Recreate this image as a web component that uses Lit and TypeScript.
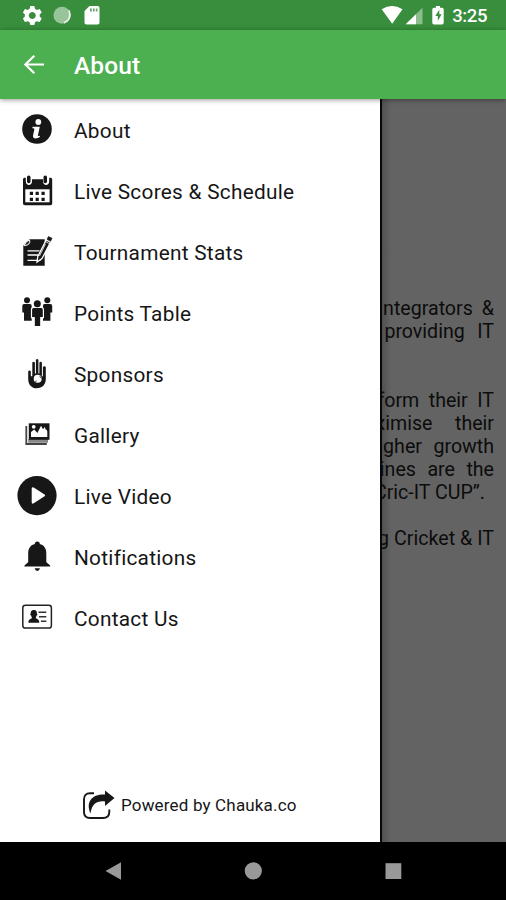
import { LitElement, html, css, svg } from "lit";
import { customElement } from "lit/decorators.js";

// Menu glyphs share a 40x40 grid.
const glyphs = {
  info: svg`<circle cx="20" cy="19" r="14.800"/><circle cx="21.300" cy="12" r="2.900" fill="#fff"/><path fill="#fff" d="M15.600 16.800h7.200l-1.900 8.600c-.2 1 .9.8 2.200.1l-.3 1.600c-2.600 1.700-7.600 2.300-6.700-1.900l1.300-6.100c.1-.7-.8-.8-2.100-.8z"/>`,
  calendar: svg`<path d="M7.500 6.700h1.300v3.500c0 5 6.200 5 6.200 0V8.300h11v1.900c0 5 6.200 5 6.200 0V6.700h1.300q1.700 0 1.700 1.700V32.500q0 1.800-1.800 1.800H8q-2 0-2-1.800V8.400q0-1.700 1.500-1.700z"/><rect x="10" y="4.400" width="3.500" height="7.800" rx="1.700"/><rect x="26.500" y="4.400" width="3.500" height="7.800" rx="1.700"/><path fill="#fff" d="M8.300 18.300h24.300v13H8.300z"/><path d="M12.800 20.800h3.200v3.200h-3.200zm5.800 0h3.200v3.200h-3.200zm5.900 0h3.200v3.200h-3.200zM12.800 26.700h3.200v3.200h-3.200zm5.800 0h3.200v3.200h-3.200zm5.900 0h3.200v3.200h-3.200z"/>`,
  notes: svg`<path d="M12.500 7.300h15.200v26.500H6.300V13.500z"/><path d="M7 13.700q1.600-4.500 5.500-5.800 1.800 5-5.500 5.800z" fill="#333" stroke="#fff" stroke-width="1"/><path d="M10.500 18.900h12M10.500 23h11M10.500 28.300h13" fill="none" stroke="#fff" stroke-width="1.300"/><path d="M20.800 24.500 29.300 8l4.200 2.200L25 26.600l-5 3.500z" stroke="#fff" stroke-width="1.300"/><path d="m30 7.300 1.500-2.800 3.500 1.800-1.500 3z" stroke="#222" stroke-width=".7"/><path d="m28.800 9.800 3.800 2M22.500 24l6-12" stroke="#fff" stroke-width=".8"/>`,
  people: svg`<circle cx="10" cy="7.200" r="3"/><circle cx="30.300" cy="7.200" r="3"/><path d="M7 10.900h6q1.700 0 1.700 2V27.700H7v-8.200H5.300v-6.600q0-2 1.700-2zM27.300 10.900h6q1.900 0 1.900 2v6.600h-1.800v8.200H26V12.900q0-2 1.300-2z"/><path d="M16.500 14.400h7.800q2.100 0 2.100 2.300v8h-2.600v9h-6.600v-9h-2.700v-8q0-2.300 2-2.300z" stroke="#fff" stroke-width="1.200"/><circle cx="20.300" cy="10.700" r="3.500"/>`,
  hand: svg`<path d="M11.200 17.200q1.300-1.200 2.600 0v5h1.500V8.500q1.200-1.500 2.600 0v11h1V5.700q1.200-1.500 2.500 0v13.800h1V8.500q1.300-1.500 2.500 0v13.700h1V13q1.500-1.400 2.900 0v12c0 5.500-3.600 9.300-9 9.300-5.300 0-8.600-3.600-8.600-9.300z"/><circle cx="20.700" cy="24.800" r="4" fill="#fff"/><path d="m23 21.500.3 2.200 1.500.5M18 27.600l1.800-.8" fill="none" stroke="#333" stroke-width=".8"/>`,
  gallery: svg`<path d="M9.300 11v18h20.500" fill="none" stroke="#444" stroke-width="1.800"/><path d="M11.300 24h19.700v3.800H11.300z" fill="#888"/><path d="M11.800 8.300h20.700v16.500H11.800z"/><path d="M14 22v-5.100l3.200-2.500 3.200 3.600 3.600-7.200 2 3.500 1.800-2.200 1.200 3.200.6-.7.700 2V22z" fill="#fff"/><circle cx="16.700" cy="11.800" r="1.900" fill="#fff"/>`,
  video: svg`<circle cx="20" cy="19.600" r="19.600"/><path d="M14.700 12.700q0-2.200 2-1.200l10.900 7q1.300.9 0 1.800l-10.900 7q-2 1-2-1z" fill="#fff"/>`,
  bell: svg`<circle cx="20.300" cy="7" r="2.500"/><path d="M20.300 6.700c6 0 9 4 9 9.700v8.100c0 2 4 2.800 4 4.900H7.300c0-2.100 3.900-2.900 3.900-4.900v-8.100c0-5.700 3-9.700 9.100-9.700z"/><path d="M17.600 31.300h5.400q-.7 2.600-2.700 2.600t-2.700-2.600z"/>`,
  contact: svg`<rect x="5.800" y="7.200" width="28.600" height="22.800" rx="2.600" fill="#fff" stroke="#222" stroke-width="1.500"/><path d="M16.800 11.900c2.700 0 3.300 1.900 3.100 3.900 1 .2.400 1.700-.3 1.700-.3 1.300-.8 1.800-.8 2.800 1.500.9 3.500 1 3.500 4.500H11.400c0-3.500 2-3.600 3.500-4.500 0-1-.5-1.500-.8-2.800-.8 0-1.300-1.500-.4-1.700-.2-2 .4-3.900 3.100-3.900z"/><path d="M21.500 14.200h7.800M22 18.800h7.300M23.900 23.300h5.400" stroke="#333" stroke-width="1.500"/>`,
};

const menu = [
  { label: "About", icon: glyphs.info },
  { label: "Live Scores & Schedule", icon: glyphs.calendar },
  { label: "Tournament Stats", icon: glyphs.notes },
  { label: "Points Table", icon: glyphs.people },
  { label: "Sponsors", icon: glyphs.hand },
  { label: "Gallery", icon: glyphs.gallery },
  { label: "Live Video", icon: glyphs.video },
  { label: "Notifications", icon: glyphs.bell },
  { label: "Contact Us", icon: glyphs.contact },
];

// Justified lines of the article: words and the gap between them.
const lines = [
  { words: ["Integrators", "&"], gap: 9 },
  { words: ["providing", "IT"], gap: 12.5 },
  { words: [], gap: 0 },
  { words: [], gap: 0 },
  { words: ["transform", "their", "IT"], gap: 9.5 },
  { words: ["maximise", "their"], gap: 22.5 },
  { words: ["higher", "growth"], gap: 11.5 },
  { words: ["disciplines", "are", "the"], gap: 11.5 },
  { words: ["“Cric-IT", "CUP”."], gap: 4.5, end: 9 },
  { words: [], gap: 0 },
  { words: ["promoting", "Cricket", "&", "IT"], gap: 5 },
];

@customElement("app-root")
export class AppRoot extends LitElement {
  static styles = css`
    :host { display: flex; flex-direction: column; width: 506px; height: 900px; overflow: hidden; font-family: Roboto, sans-serif; background: #000; }
    svg { display: block; flex: none; }
    .status { height: 30px; flex: none; background: #388e3c; color: #fff; display: flex; justify-content: space-between; }
    .clock { font-size: 18.5px; font-weight: 500; line-height: 32px; margin-right: 19px; letter-spacing: -.4px; }
    .right { display: flex; }
    .bar { height: 69px; flex: none; background: #4caf50; color: #fff; display: flex; align-items: center; padding-left: 22px; z-index: 1; box-shadow: 0 1px 5px rgba(0, 0, 0, .4); }
    .title { font-size: 24.5px; font-weight: 500; margin: 3px 0 0 27px; line-height: 30px; letter-spacing: .1px; }
    .body { flex: 1; display: flex; min-height: 0; }
    .drawer { width: 380px; flex: none; background: #fff; display: flex; flex-direction: column; border-right: 2px solid #080808; color: #161616; }
    .row { height: 61px; flex: none; display: flex; align-items: center; padding-left: 17px; }
    .menu { flex: 1; }
    .icon { fill: #171717; }
    .label { margin: 2px 0 0 17px; font-size: 20.8px; line-height: 24px; letter-spacing: .27px; white-space: nowrap; }
    .powered { display: flex; align-items: center; padding: 0 0 19px 83px; gap: 6px; font-size: 17px; letter-spacing: .17px; }
    .page { flex: 1; min-width: 0; background: linear-gradient(90deg, #505050, #636363 9px); overflow: hidden; padding: 198px 12px 0 0; box-sizing: border-box; color: #0c0c0c; font-size: 19.6px; line-height: 23px; }
    .line { height: 23px; display: flex; justify-content: flex-end; white-space: nowrap; }
    .nav { height: 58px; flex: none; background: #000; }
  `;

  render() {
    return html`
      <div class="status">
        <svg width="120" height="30" fill="#fff">
          <path fill-rule="evenodd" d="M30.300 6h4l.7 2.800 2 1.100 2.700-.8 2 3.400-2 2v2l2 2.100-2 3.400-2.700-.8-2 1.100-.7 2.700h-4l-.7-2.700-2-1.100-2.700.8-2-3.400 2-2.100v-2l-2-2 2-3.400 2.700.8 2-1.100zM32.300 12a3.500 3.500 0 1 0 .001 0z"/>
          <circle cx="62" cy="15.300" r="8.500" opacity=".48"/>
          <path d="M69 10.300q3.300 9-5 12.800" fill="none" stroke="#fff" stroke-width="1.700" opacity=".8"/>
          <path d="m89.500 6-5 5v11.500q0 2 2 2h11q2 0 2-2V8q0-2-2-2z"/>
          <path d="M90 8.500h1.800v3H90zm3 0h1.600v3H93zm2.800 0h1.600v3h-1.600z" fill="#63a266"/>
        </svg>
        <div class="right">
          <svg width="71" height="30" fill="#fff">
            <path d="M.7 9.300Q11 2.500 21.500 9.300L11.200 23.800z"/>
            <path d="M41.500 7.800v16.500H24.700z" opacity=".42"/><path d="M35 14.200v10.100H24.700z"/>
            <path d="M55 6h4v1.800h2q1.700 0 1.700 1.700v13.300q0 1.700-1.700 1.700h-8q-1.700 0-1.700-1.700V9.500q0-1.700 1.700-1.700h2z"/>
            <path d="m58.300 9.800-4 6.300h2.500v4.700l3.900-6.500h-2.400z" fill="#388e3c"/>
          </svg>
          <span class="clock">3:25</span>
        </div>
      </div>
      <header class="bar">
        <svg width="25" height="30" fill="none" stroke="#fff" stroke-width="2.200"><path d="M22 14.500H3.500M12.300 5.700l-8.900 8.800 8.900 8.800"/></svg>
        <h1 class="title">About</h1>
      </header>
      <div class="body">
        <aside class="drawer">
          <nav class="menu">
            ${menu.map((m) => html`<div class="row"><svg class="icon" width="40" height="40" viewBox="0 0 40 40">${m.icon}</svg><span class="label">${m.label}</span></div>`)}
          </nav>
          <div class="powered">
            <svg width="32" height="36" fill="#171717">
              <path d="M11 6.300H7q-6 0-6 6V25q0 6 6 6h13q6.300 0 6.300-6v-2.500" fill="none" stroke="#171717" stroke-width="1.900"/>
              <path d="M22 3.500 31.500 11 22 19v-4.600C14 13.500 9 16.500 7.500 26.500 2.500 14.500 9 7 22 7.500z"/>
            </svg>
            <span>Powered by Chauka.co</span>
          </div>
        </aside>
        <main class="page">
          ${lines.map((l) => html`<div class="line" style="gap:${l.gap}px;padding-right:${l.end ?? 0}px">${l.words.map((w) => html`<span>${w}</span>`)}</div>`)}
        </main>
      </div>
      <div class="nav">
        <svg width="506" height="58" fill="#999"><path d="M105.500 29 121 20.300v17.500z"/><circle cx="253.300" cy="28.800" r="8.600"/><path d="M385.500 21.200h15.800v15.800h-15.800z"/></svg>
      </div>
    `;
  }
}
